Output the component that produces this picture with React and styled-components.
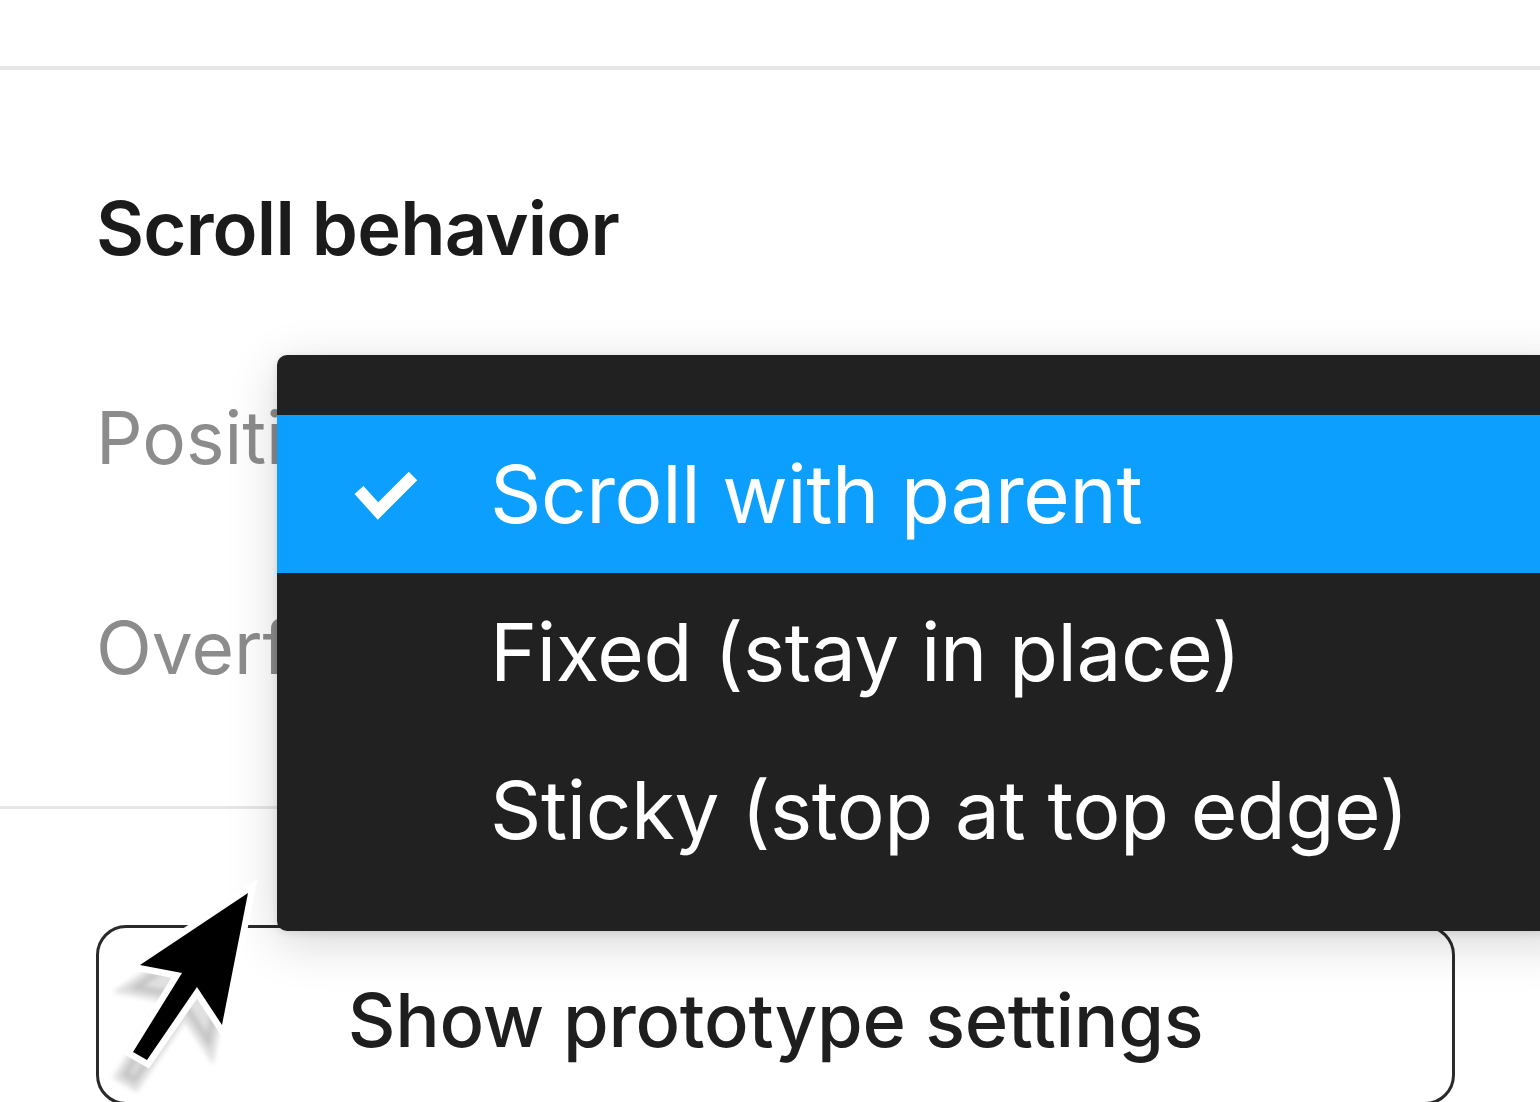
import React from "react";
import styled, { createGlobalStyle } from "styled-components";

const GlobalStyle = createGlobalStyle`
  html, body {
    margin: 0;
    padding: 0;
    background: #ffffff;
    overflow: hidden;
  }
  body {
    font-family: Inter, "Noto Sans", "Liberation Sans", sans-serif;
    -webkit-font-smoothing: antialiased;
  }
`;

const Panel = styled.div`
  position: relative;
  width: 1540px;
  height: 1102px;
  overflow: hidden;
  background: #ffffff;
  display: flex;
  flex-direction: column;
`;

const TopSpace = styled.div`
  height: 66px;
  flex-shrink: 0;
`;

const Divider = styled.div`
  height: ${(p) => p.$thick || 4}px;
  background: #e6e6e6;
  flex-shrink: 0;
`;

const Section = styled.section`
  padding: 108px 0 53px 96px;
  display: flex;
  flex-direction: column;
`;

const Title = styled.h2`
  margin: 0 0 55px;
  height: 100px;
  line-height: 100px;
  font-size: 74px;
  font-weight: 600;
  color: #1b1b1b;
  letter-spacing: -0.8px;
`;

const FieldRow = styled.div`
  height: 210px;
  display: flex;
  align-items: center;
`;

const FieldLabel = styled.span`
  font-size: 73px;
  line-height: 100px;
  color: #8c8c8c;
`;

const Footer = styled.div`
  padding: 116px 85px 0 96px;
`;

const Button = styled.button`
  width: 100%;
  height: 180px;
  flex-shrink: 0;
  padding: 10px 0 0;
  border: 3px solid #2a2a2a;
  border-radius: 30px;
  background: transparent;
  font-family: Inter, "Noto Sans", "Liberation Sans", sans-serif;
  font-size: 74px;
  font-weight: 500;
  letter-spacing: -0.3px;
  color: #1e1e1e;
  display: flex;
  align-items: center;
  justify-content: center;
`;

const Menu = styled.div`
  position: absolute;
  left: 277px;
  top: 355px;
  width: 1300px;
  padding: 60px 0 42px;
  background: #212121;
  border-radius: 10px;
  box-shadow: 0 12px 50px rgba(0, 0, 0, 0.16), 0 2px 8px rgba(0, 0, 0, 0.1);
  z-index: 2;
`;

const MenuItem = styled.div`
  height: 158px;
  display: flex;
  align-items: center;
  background: ${(p) => (p.$active ? "#0d9ffd" : "transparent")};
  color: #ffffff;
`;

const CheckSlot = styled.div`
  width: 213px;
  flex-shrink: 0;
  padding-left: 76px;
  box-sizing: border-box;
  display: flex;
  align-items: center;
`;

const ItemText = styled.span`
  font-size: 80px;
  line-height: 100px;
  font-weight: 400;
  letter-spacing: -0.4px;
  white-space: nowrap;
`;

const Cursor = styled.svg`
  position: absolute;
  left: 100px;
  top: 840px;
  width: 200px;
  height: 262px;
  z-index: 3;
  overflow: visible;
`;

const Check = () => (
  <svg width="64" height="52" viewBox="0 0 64 52">
    <path
      d="M6 22 L25 43 L60 8"
      fill="none"
      stroke="#ffffff"
      strokeWidth="12"
      strokeLinejoin="miter"
    />
  </svg>
);

const arrow = "148,53 40,125 82,133 33,212 47,220 97,147 122,185";

const items = [
  { label: "Scroll with parent", active: true },
  { label: "Fixed (stay in place)" },
  { label: "Sticky (stop at top edge)" },
];

export default function App() {
  return (
    <>
      <GlobalStyle />
      <Panel>
        <TopSpace />
        <Divider $thick={4} />
        <Section>
          <Title>Scroll behavior</Title>
          <FieldRow>
            <FieldLabel>Position</FieldLabel>
          </FieldRow>
          <FieldRow>
            <FieldLabel>Overflow</FieldLabel>
          </FieldRow>
        </Section>
        <Divider $thick={3} />
        <Footer>
          <Button>Show prototype settings</Button>
        </Footer>

        <Menu>
          {items.map((it) => (
            <MenuItem key={it.label} $active={it.active}>
              <CheckSlot>{it.active && <Check />}</CheckSlot>
              <ItemText>{it.label}</ItemText>
            </MenuItem>
          ))}
        </Menu>

        <Cursor viewBox="0 0 200 262">
          <defs>
            <filter id="soft" x="-20%" y="-20%" width="140%" height="140%">
              <feGaussianBlur stdDeviation="2.5" />
            </filter>
          </defs>
          <polygon
            points={arrow}
            transform="translate(-12 24)"
            fill="rgba(0,0,0,0.12)"
            stroke="rgba(0,0,0,0.12)"
            strokeWidth="12"
            strokeLinejoin="miter"
            filter="url(#soft)"
          />
          <polygon
            points={arrow}
            fill="#000000"
            stroke="#ffffff"
            strokeWidth="13"
            strokeLinejoin="miter"
            strokeMiterlimit="10"
            paintOrder="stroke"
          />
        </Cursor>
      </Panel>
    </>
  );
}
